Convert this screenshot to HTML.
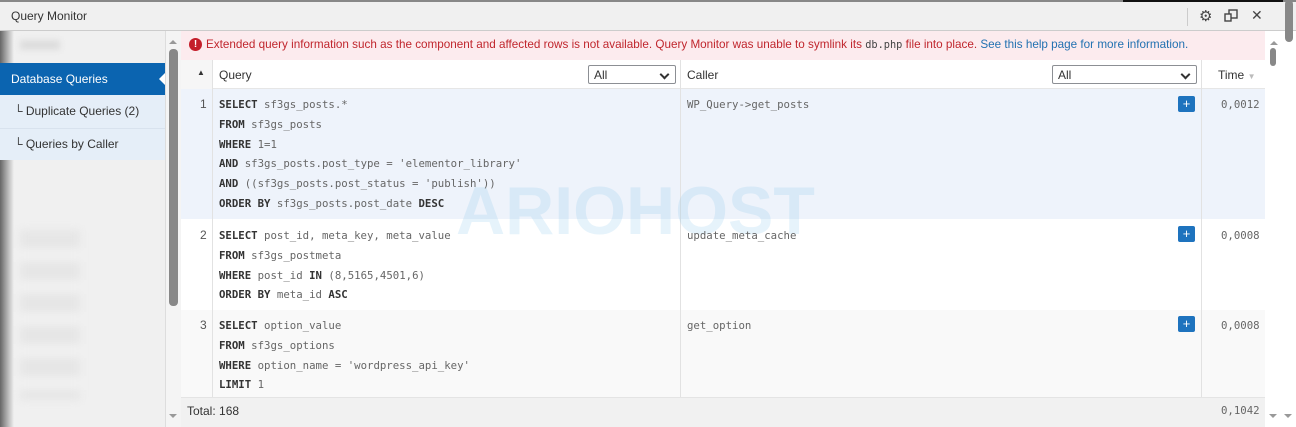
<!DOCTYPE html>
<html><head><meta charset="utf-8"><style>
*{box-sizing:border-box;margin:0;padding:0}
body{width:1296px;height:427px;overflow:hidden;background:#fff;font-family:"Liberation Sans",sans-serif;position:relative}
.abs{position:absolute}
.mono{font-family:"DejaVu Sans Mono","Liberation Mono",monospace;font-size:10.7px;color:#666}
.mono b{color:#333}
.ln{height:19.8px;line-height:19.8px;white-space:pre}
.plus{position:absolute;width:17px;height:16px;background:#1e73be;border-radius:2px;color:#fff;font-size:13px;line-height:15px;text-align:center}
.sel{position:absolute;height:19px;border:1px solid #8c8f94;background:#fff;font-size:12px;color:#333;padding:2px 5px;border-radius:2px}
.sel:after{content:"";position:absolute;right:7px;top:5px;width:5px;height:5px;border-right:2px solid #333;border-bottom:2px solid #333;transform:rotate(45deg)}
</style></head><body>
<div class="abs" style="left:0;top:0;width:1296px;height:2px;background:#888"></div>
<div class="abs" style="left:1123px;top:0;width:160px;height:3px;background:#111"></div>
<div class="abs" style="left:0;top:2px;width:1296px;height:29px;background:#f0f0f0;border-bottom:1px solid #ccc"></div>
<div class="abs" style="left:11px;top:9px;font-size:12px;color:#333">Query Monitor</div>
<div class="abs" style="left:1187px;top:8px;width:1px;height:18px;background:#ccc"></div>
<div class="abs" style="left:1199px;top:7px;font-size:15px;color:#444">⚙</div>
<svg class="abs" style="left:1224px;top:9px" width="14" height="13" viewBox="0 0 14 13"><rect x="5" y="1" width="8" height="8" fill="none" stroke="#444" stroke-width="1.4"/><rect x="1" y="5" width="6" height="7" fill="#f0f0f0" stroke="#444" stroke-width="1.4"/></svg>
<div class="abs" style="left:1251px;top:7px;font-size:14px;color:#444">✕</div>
<div class="abs" style="left:1265px;top:31px;width:31px;height:396px;background:#fff"></div>
<div class="abs" style="left:1285px;top:0;width:8px;height:42px;background:#888;border-radius:4px"></div>
<div class="abs" style="left:1270px;top:37px;width:0;height:0;border:4px solid transparent;border-bottom-color:#999"></div>
<div class="abs" style="left:1270px;top:48px;width:6px;height:18px;background:#888;border-radius:3px"></div>
<div class="abs" style="left:1269px;top:414px;border:4px solid transparent;border-top-color:#999"></div>
<div class="abs" style="left:1284px;top:414px;border:4px solid transparent;border-top-color:#999"></div>
<div class="abs" style="left:0;top:31px;width:165px;height:396px;background:#f0f0f0"></div>
<div class="abs" style="left:0;top:31px;width:14px;height:396px;background:linear-gradient(90deg,#666,#bbb 60%,#f0f0f0)"></div>
<div class="abs" style="left:20px;top:40px;width:40px;height:10px;background:#ddd;filter:blur(3px)"></div>
<div class="abs" style="left:0;top:63px;width:165px;height:32px;background:#0b64b0"></div>
<div class="abs" style="top:72px;border:7px solid transparent;border-right-color:#fff;border-left:0;width:0;height:0;left:159px"></div>
<div class="abs" style="left:11px;top:72px;font-size:12px;color:#fff">Database Queries</div>
<div class="abs" style="left:0;top:95px;width:165px;height:65px;background:#e5eef8"></div>
<div class="abs" style="left:0;top:128px;width:165px;height:1px;background:#d8e2ee"></div>
<div class="abs" style="left:14px;top:104px;font-size:12px;color:#333">└ Duplicate Queries (2)</div>
<div class="abs" style="left:14px;top:137px;font-size:12px;color:#333">└ Queries by Caller</div>
<div class="abs" style="left:20px;top:230px;width:60px;height:170px;background:repeating-linear-gradient(#e6e6e6 0 18px,#f0f0f0 18px 32px);filter:blur(4px)"></div>
<div class="abs" style="left:165px;top:31px;width:16px;height:396px;background:#f4f4f4;border-left:1px solid #ddd"></div>
<div class="abs" style="left:169px;top:36px;border:4px solid transparent;border-bottom-color:#999"></div>
<div class="abs" style="left:169px;top:49px;width:9px;height:257px;background:#888;border-radius:4px"></div>
<div class="abs" style="left:169px;top:414px;border:4px solid transparent;border-top-color:#999"></div>
<div class="abs" style="left:181px;top:31px;width:1084px;height:29px;background:#fcebee"></div>
<div class="abs" style="left:189px;top:38px;width:13px;height:13px;border-radius:50%;background:#c41e2a;color:#fff;font-size:10px;font-weight:bold;text-align:center;line-height:13px">!</div>
<div class="abs" style="left:206px;top:38px;font-size:11.7px;color:#c0262d;white-space:nowrap">Extended query information such as the component and affected rows is not available. Query Monitor was unable to symlink its <span class="mono" style="color:#444;font-size:10.3px">db.php</span> file into place. <span style="color:#2271b1">See this help page for more information.</span></div>
<div class="abs" style="left:181px;top:60px;width:1084px;height:29px;background:#fff;border-bottom:1px solid #e6e6e6"></div>
<div class="abs" style="left:181px;top:60px;width:31px;height:29px;background:#f6f6f6"></div>
<div class="abs" style="left:197px;top:68px;font-size:8px;color:#333">▲</div>
<div class="abs" style="left:219px;top:68px;font-size:12px;color:#333">Query</div>
<div class="sel" style="left:588px;top:65px;width:88px">All</div>
<div class="abs" style="left:687px;top:68px;font-size:12px;color:#333">Caller</div>
<div class="sel" style="left:1052px;top:65px;width:145px">All</div>
<div class="abs" style="left:1218px;top:68px;font-size:12px;color:#333">Time <span style="font-size:8px;color:#bbb">▼</span></div>
<div class="abs" style="left:181px;top:89px;width:1084px;height:130px;background:#eef3fb"></div>
<div class="abs" style="left:181px;top:219px;width:1084px;height:91px;background:#fff"></div>
<div class="abs" style="left:181px;top:310px;width:1084px;height:87px;background:#f9f9f9"></div>
<div class="abs" style="left:181px;top:397px;width:1084px;height:30px;background:#f1f1f1;border-top:1px solid #e4e4e4"></div>
<div class="abs" style="left:212px;top:60px;width:1px;height:337px;background:#e2e2e2"></div>
<div class="abs" style="left:680px;top:60px;width:1px;height:337px;background:#e2e2e2"></div>
<div class="abs" style="left:1201px;top:60px;width:1px;height:337px;background:#e2e2e2"></div>
<div class="abs" style="left:456px;top:172px;font-size:68px;font-weight:bold;color:rgba(130,195,235,0.2);letter-spacing:0px;font-family:'Liberation Sans',sans-serif">ARIOHOST</div>
<div class="abs" style="left:200px;top:97px;font-size:12px;color:#555">1</div>
<div class="abs mono" style="left:219px;top:95px">
<div class="ln"><b>SELECT</b> sf3gs_posts.*</div>
<div class="ln"><b>FROM</b> sf3gs_posts</div>
<div class="ln"><b>WHERE</b> 1=1</div>
<div class="ln"><b>AND</b> sf3gs_posts.post_type = 'elementor_library'</div>
<div class="ln"><b>AND</b> ((sf3gs_posts.post_status = 'publish'))</div>
<div class="ln"><b>ORDER BY</b> sf3gs_posts.post_date <b>DESC</b></div>
</div>
<div class="abs mono" style="left:687px;top:95px"><div class="ln">WP_Query-&gt;get_posts</div></div>
<div class="plus" style="left:1178px;top:96px">+</div>
<div class="abs mono" style="left:1221px;top:95px"><div class="ln">0,0012</div></div>
<div class="abs" style="left:200px;top:228px;font-size:12px;color:#555">2</div>
<div class="abs mono" style="left:219px;top:226px">
<div class="ln"><b>SELECT</b> post_id, meta_key, meta_value</div>
<div class="ln"><b>FROM</b> sf3gs_postmeta</div>
<div class="ln"><b>WHERE</b> post_id <b>IN</b> (8,5165,4501,6)</div>
<div class="ln"><b>ORDER BY</b> meta_id <b>ASC</b></div>
</div>
<div class="abs mono" style="left:687px;top:226px"><div class="ln">update_meta_cache</div></div>
<div class="plus" style="left:1178px;top:226px">+</div>
<div class="abs mono" style="left:1221px;top:226px"><div class="ln">0,0008</div></div>
<div class="abs" style="left:200px;top:318px;font-size:12px;color:#555">3</div>
<div class="abs mono" style="left:219px;top:316px">
<div class="ln"><b>SELECT</b> option_value</div>
<div class="ln"><b>FROM</b> sf3gs_options</div>
<div class="ln"><b>WHERE</b> option_name = 'wordpress_api_key'</div>
<div class="ln"><b>LIMIT</b> 1</div>
</div>
<div class="abs mono" style="left:687px;top:316px"><div class="ln">get_option</div></div>
<div class="plus" style="left:1178px;top:316px">+</div>
<div class="abs mono" style="left:1221px;top:316px"><div class="ln">0,0008</div></div>
<div class="abs" style="left:187px;top:404px;font-size:12px;color:#333">Total: 168</div>
<div class="abs mono" style="left:1221px;top:401px"><div class="ln">0,1042</div></div>
</body></html>
